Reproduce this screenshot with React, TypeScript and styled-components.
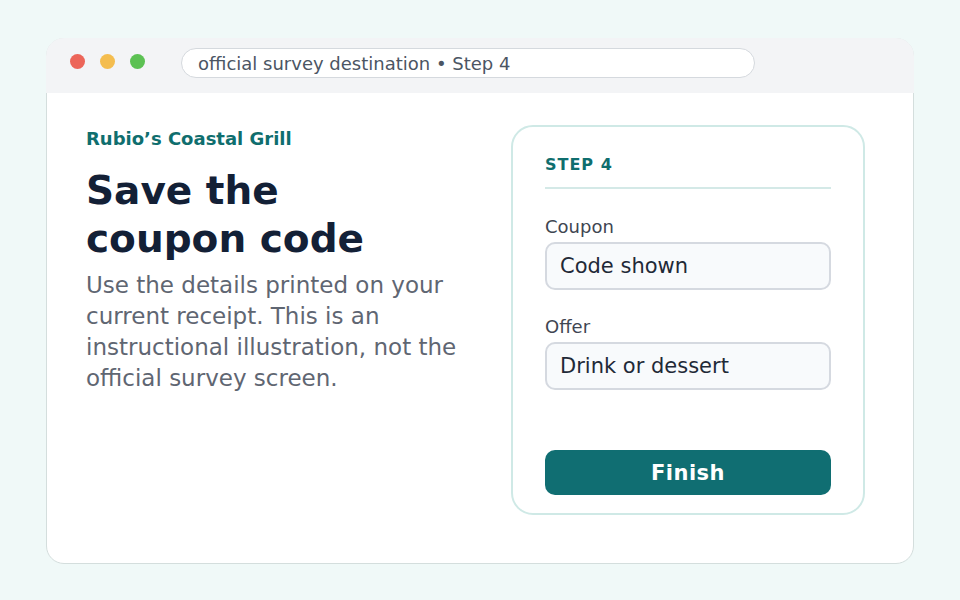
import React from "react";
import styled, { createGlobalStyle } from "styled-components";

const GlobalStyle = createGlobalStyle`
  html, body {
    margin: 0;
    padding: 0;
    background: #f0f9f8;
    font-family: "DejaVu Sans", "Liberation Sans", sans-serif;
  }
`;

const Page = styled.div`
  width: 960px;
  height: 600px;
  box-sizing: border-box;
  padding: 38px 46px 36px;
`;

const Window = styled.div`
  height: 526px;
  box-sizing: border-box;
  background: #ffffff;
  border: 1px solid #d4dedd;
  border-radius: 18px;
  display: flex;
  flex-direction: column;
`;

const TopBar = styled.div`
  height: 55px;
  box-sizing: border-box;
  margin: -1px -1px 0;
  background: #f3f4f6;
  border-radius: 18px 18px 0 0;
  display: flex;
  align-items: center;
  padding: 0 24px 5px;
  gap: 15px;
`;

const Dot = styled.span<{ $color: string }>`
  width: 15px;
  height: 15px;
  margin-bottom: 4px;
  border-radius: 50%;
  background: ${(p) => p.$color};
`;

const Address = styled.div`
  margin-left: 21px;
  width: 574px;
  height: 30px;
  box-sizing: border-box;
  border: 1px solid #d5d9de;
  border-radius: 15px;
  background: #ffffff;
  display: flex;
  align-items: center;
  padding-left: 16px;
  font-size: 18px;
  color: #4b5563;
`;

const Body = styled.div`
  flex: 1;
  display: grid;
  grid-template-columns: 385px 354px;
  gap: 40px;
  padding: 32px 0 48px 39px;
`;

const Intro = styled.div`
  display: flex;
  flex-direction: column;
  padding-top: 3px;
`;

const Brand = styled.div`
  font-size: 18px;
  font-weight: bold;
  color: #0f6e6e;
  line-height: 22px;
`;

const Headline = styled.h1`
  margin: 17px 0 0;
  font-size: 39px;
  line-height: 48px;
  font-weight: bold;
  color: #132036;
`;

const Lead = styled.p`
  margin: 7px 0 0;
  font-size: 23px;
  line-height: 31px;
  color: #5f6672;
`;

const Card = styled.div`
  box-sizing: border-box;
  border: 2px solid #cfe9e6;
  border-radius: 22px;
  padding: 28px 32px 18px;
  display: flex;
  flex-direction: column;
`;

const StepTitle = styled.div`
  font-size: 16px;
  font-weight: bold;
  letter-spacing: 1px;
  color: #0f6e6e;
  line-height: 20px;
  padding-bottom: 12px;
  border-bottom: 2px solid #d4e9e7;
`;

const Field = styled.div<{ $top: number }>`
  margin-top: ${(p) => p.$top}px;
  display: flex;
  flex-direction: column;
  gap: 4px;
`;

const Label = styled.label`
  font-size: 18px;
  line-height: 22px;
  color: #3f4652;
`;

const Input = styled.div`
  height: 48px;
  box-sizing: border-box;
  border: 2px solid #d5d9e0;
  border-radius: 10px;
  background: #f8fafc;
  display: flex;
  align-items: center;
  padding-left: 13px;
  font-size: 21px;
  color: #1f2937;
`;

const Button = styled.button`
  margin-top: auto;
  height: 45px;
  border: none;
  border-radius: 10px;
  background: #106e72;
  color: #ffffff;
  font-family: inherit;
  font-size: 21px;
  font-weight: bold;
  letter-spacing: 0.5px;
`;

export default function App() {
  return (
    <>
      <GlobalStyle />
      <Page>
        <Window>
          <TopBar>
            <Dot $color="#ec6559" />
            <Dot $color="#f4bd4f" />
            <Dot $color="#5cc153" />
            <Address>official survey destination • Step 4</Address>
          </TopBar>
          <Body>
            <Intro>
              <Brand>Rubio’s Coastal Grill</Brand>
              <Headline>
                Save the
                <br />
                coupon code
              </Headline>
              <Lead>
                Use the details printed on your current receipt. This is an
                instructional illustration, not the official survey screen.
              </Lead>
            </Intro>
            <Card>
              <StepTitle>STEP 4</StepTitle>
              <Field $top={27}>
                <Label>Coupon</Label>
                <Input>Code shown</Input>
              </Field>
              <Field $top={26}>
                <Label>Offer</Label>
                <Input>Drink or dessert</Input>
              </Field>
              <Button>Finish</Button>
            </Card>
          </Body>
        </Window>
      </Page>
    </>
  );
}
